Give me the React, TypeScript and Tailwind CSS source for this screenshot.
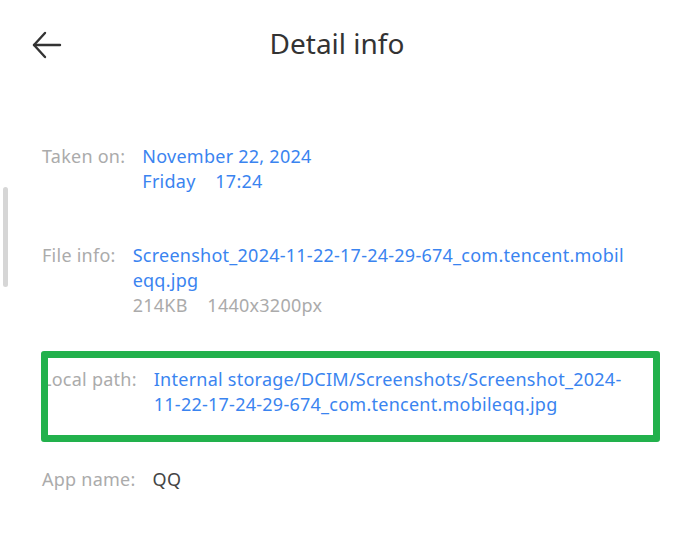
import React from "react";

const blue = "text-[#3a84f0]";

function Row({
  label,
  children,
  className = "",
}: {
  label: string;
  children: React.ReactNode;
  className?: string;
}) {
  return (
    <div className={`flex items-start ${className}`}>
      <span className="shrink-0 text-[#ababab] pr-[17px]">{label}</span>
      <div className="min-w-0">{children}</div>
    </div>
  );
}

export default function App() {
  return (
    <div className="relative w-[674px] h-[536px] bg-white overflow-hidden font-['Noto_Sans',sans-serif] text-[18px] leading-[25px] tracking-[0.25px]">
      {/* scrollbar */}
      <div className="absolute left-[3px] top-[187px] w-[5px] h-[100px] rounded-full bg-[#d6d6d6]" />

      <header className="relative flex items-center h-[90px] px-[32px]">
        <svg width="30" height="28" viewBox="0 0 30 28" fill="none" stroke="#333" strokeWidth="2.4" strokeLinecap="round" strokeLinejoin="round">
          <path d="M28 14H2" />
          <path d="M13 2L2 14l11 12" />
        </svg>
        <h1 className="absolute inset-x-0 top-[24px] text-center text-[28px] leading-[38px] tracking-normal text-[#333]">Detail info</h1>
      </header>

      <div className="pl-[42px] pr-[30px] pt-[54px]">
        <Row label="Taken on:">
          <div className={blue}>November 22, 2024</div>
          <div className={blue}>Friday&nbsp;&nbsp;&nbsp;&nbsp;17:24</div>
        </Row>

        <Row label="File info:" className="mt-[49px]">
          <div className={blue}>Screenshot_2024-11-22-17-24-29-674_com.tencent.mobil</div>
          <div className={blue}>eqq.jpg</div>
          <div className="text-[#ababab]">214KB&nbsp;&nbsp;&nbsp;&nbsp;1440x3200px</div>
        </Row>

        <div className="relative mt-[33px] -ml-[1px]">
          <Row label="Local path:" className="pl-[1px] pt-[16px] pb-[14px]">
            <div className={blue}>Internal storage/DCIM/Screenshots/Screenshot_2024-</div>
            <div className={blue}>11-22-17-24-29-674_com.tencent.mobileqq.jpg</div>
          </Row>
          <div className="absolute left-0 top-0 w-[619px] h-[91px] border-[7px] border-[#22b14c] rounded-[3px]" />
        </div>

        <Row label="App name:" className="mt-[36px]">
          <div className="text-[#444]">QQ</div>
        </Row>
      </div>
    </div>
  );
}
